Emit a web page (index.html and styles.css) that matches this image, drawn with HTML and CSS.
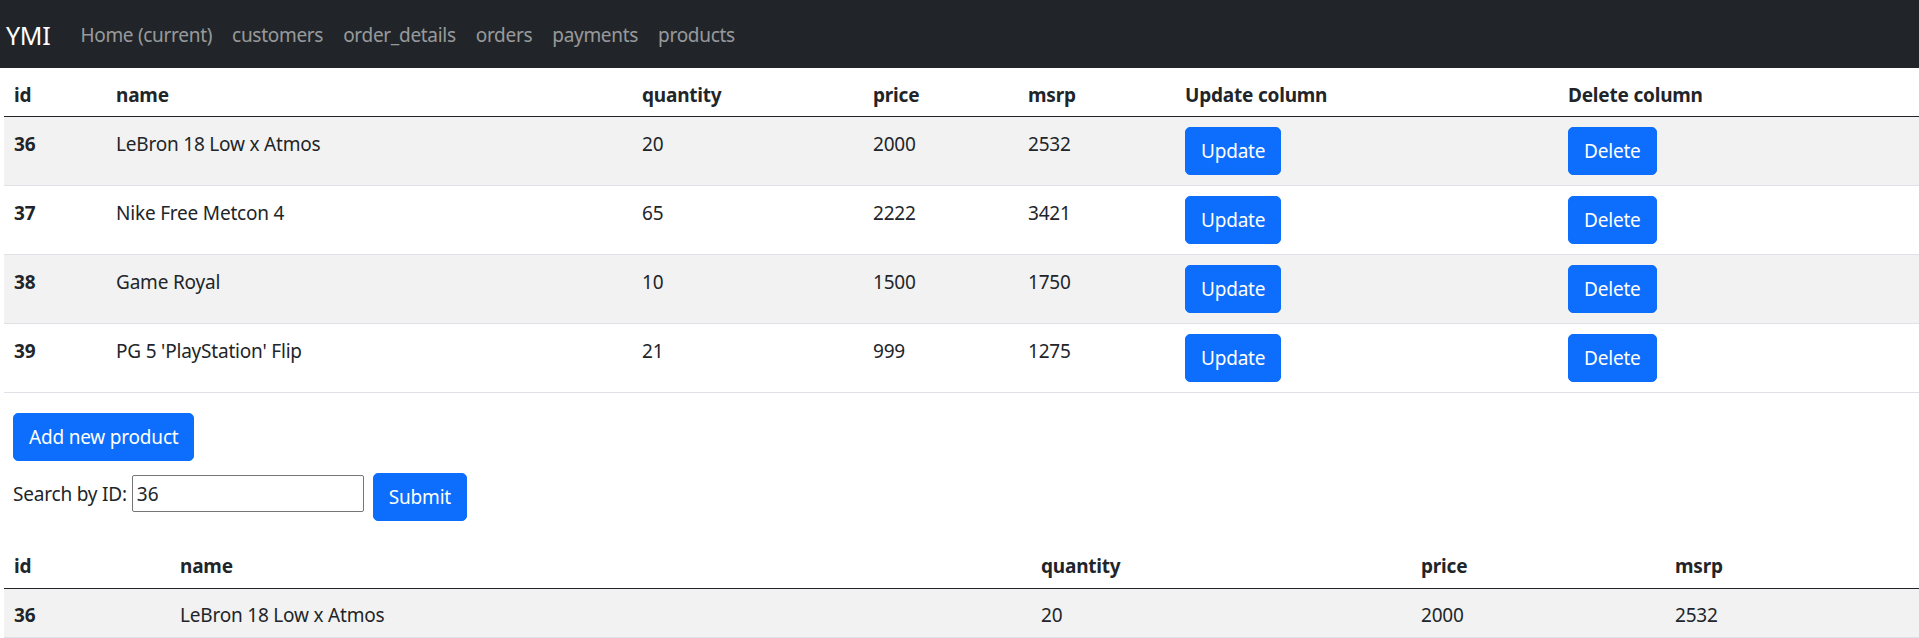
FILE: index.html
```html
<!DOCTYPE html>
<html lang="en">
<head>
<meta charset="utf-8">
<title>YMI - products</title>
<link rel="stylesheet" href="styles.css">
</head>
<body>
<nav class="navbar">
  <a class="brand" href="#">YMI</a>
  <ul class="nav-links">
    <li><a href="#">Home (current)</a></li>
    <li><a href="#">customers</a></li>
    <li><a href="#">order_details</a></li>
    <li><a href="#">orders</a></li>
    <li><a href="#">payments</a></li>
    <li><a href="#">products</a></li>
  </ul>
</nav>
<main class="content">
  <table class="data-table products-table">
    <colgroup>
      <col class="c-102"><col class="c-526"><col class="c-231"><col class="c-155"><col class="c-157"><col class="c-383"><col>
    </colgroup>
    <thead>
      <tr><th>id</th><th>name</th><th>quantity</th><th>price</th><th>msrp</th><th>Update column</th><th>Delete column</th></tr>
    </thead>
    <tbody>
      <tr><th>36</th><td>LeBron 18 Low x Atmos</td><td>20</td><td>2000</td><td>2532</td><td class="cell-action"><button class="btn btn-update">Update</button></td><td class="cell-action"><button class="btn btn-delete">Delete</button></td></tr>
      <tr><th>37</th><td>Nike Free Metcon 4</td><td>65</td><td>2222</td><td>3421</td><td class="cell-action"><button class="btn btn-update">Update</button></td><td class="cell-action"><button class="btn btn-delete">Delete</button></td></tr>
      <tr><th>38</th><td>Game Royal</td><td>10</td><td>1500</td><td>1750</td><td class="cell-action"><button class="btn btn-update">Update</button></td><td class="cell-action"><button class="btn btn-delete">Delete</button></td></tr>
      <tr><th>39</th><td>PG 5 'PlayStation' Flip</td><td>21</td><td>999</td><td>1275</td><td class="cell-action"><button class="btn btn-update">Update</button></td><td class="cell-action"><button class="btn btn-delete">Delete</button></td></tr>
    </tbody>
  </table>
  <div class="actions">
    <button class="btn btn-add">Add new product</button>
  </div>
  <form class="search-form">
    <label class="search-label" for="search-id">Search by ID:</label>
    <input class="search-input" id="search-id" type="text" value="36">
    <button class="btn btn-submit" type="button">Submit</button>
  </form>
  <table class="data-table result-table">
    <colgroup>
      <col class="c-166"><col class="c-861"><col class="c-380"><col class="c-254"><col>
    </colgroup>
    <thead>
      <tr><th>id</th><th>name</th><th>quantity</th><th>price</th><th>msrp</th></tr>
    </thead>
    <tbody>
      <tr><th>36</th><td>LeBron 18 Low x Atmos</td><td>20</td><td>2000</td><td>2532</td></tr>
    </tbody>
  </table>
</main>
</body>
</html>
```
FILE: styles.css
```css
* { box-sizing: border-box; }

html, body {
  margin: 0;
  padding: 0;
  background: #fff;
}

body {
  font-family: "Noto Sans", "Open Sans", sans-serif;
  font-size: 19px;
  letter-spacing: -0.2px;
  color: #212529;
}

/* Navbar */
.navbar {
  display: flex;
  align-items: center;
  height: 68px;
  padding: 2px 0 0 6px;
  background: #212529;
}

.brand {
  font-size: 25px;
  line-height: 37px;
  letter-spacing: -0.3px;
  color: #fff;
  text-decoration: none;
  margin-right: 20px;
}

.nav-links {
  display: flex;
  list-style: none;
  margin: 0;
  padding: 0;
}

.nav-links a {
  display: block;
  padding: 0 10px;
  font-size: 19px;
  letter-spacing: -0.3px;
  line-height: 30px;
  color: rgba(255, 255, 255, 0.55);
  text-decoration: none;
}

/* Content */
.content {
  padding-left: 4px;
}

.data-table {
  width: 100%;
  table-layout: fixed;
  border-collapse: collapse;
  color: #212529;
}

.c-102 { width: 102px; }
.c-526 { width: 526px; }
.c-231 { width: 231px; }
.c-155 { width: 155px; }
.c-157 { width: 157px; }
.c-383 { width: 383px; }
.c-166 { width: 166px; }
.c-861 { width: 861px; }
.c-380 { width: 380px; }
.c-254 { width: 254px; }

.data-table th,
.data-table td {
  text-align: left;
  vertical-align: top;
  padding: 12.5px 10px 7.5px;
  line-height: 28px;
  border-bottom: 1px solid #dee2e6;
  font-weight: 400;
}

.data-table th { font-weight: 700; }

.data-table thead th {
  border-bottom: 1px solid #212529;
}

.data-table td.cell-action {
  padding: 10px 10px 10.5px;
}

.data-table tbody tr:nth-child(odd) > * {
  background: #f2f2f2;
}

.products-table {
  margin-bottom: 20px;
}

/* Buttons */
.btn {
  display: inline-flex;
  align-items: center;
  justify-content: center;
  height: 47.5px;
  padding: 0 15px;
  border: 1px solid #0d6efd;
  border-radius: 5px;
  background: #0d6efd;
  color: #fff;
  font-family: inherit;
  font-size: 19px;
  letter-spacing: -0.2px;
  line-height: 30px;
  cursor: pointer;
}

.actions {
  padding-left: 9px;
}

/* Search form */
.search-form {
  display: flex;
  align-items: flex-start;
  margin-top: 12.5px;
  padding-left: 9px;
}

.search-label {
  margin-top: 6px;
  line-height: 30px;
}

.search-input {
  width: 232px;
  height: 37px;
  margin-top: 2px;
  margin-left: 5px;
  padding: 0 4px;
  border: 1px solid #767676;
  border-radius: 2px;
  font-family: inherit;
  font-size: 19px;
  color: #212529;
}

.btn-submit {
  margin-left: 9px;
}

.result-table {
  margin-top: 19px;
}
```
